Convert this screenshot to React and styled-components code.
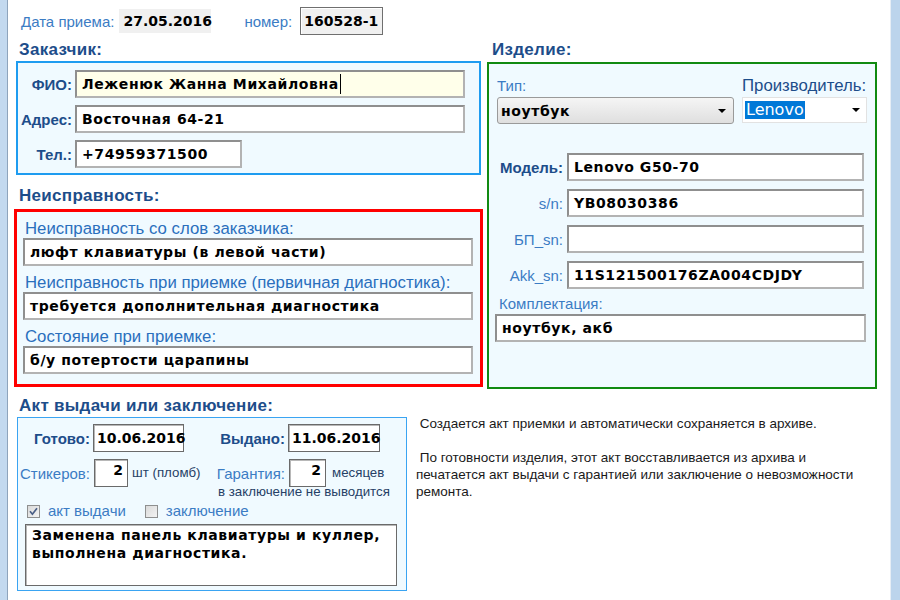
import React from 'react';
import styled, { createGlobalStyle } from 'styled-components';

const GlobalStyle = createGlobalStyle`
  html, body { margin: 0; padding: 0; background: #fff; overflow: hidden; }
  #root { width: 900px; height: 600px; }
`;

const DATA_FONT = `"DejaVu Sans", "Liberation Sans", sans-serif`;
const UI_FONT = `"Liberation Sans", Arial, sans-serif`;
const PANEL_BG = '#f0faff';
const DARK = '#1d4d8a';
const MID = '#2a6fbd';
const LIGHT = '#3b7cc4';

const Window = styled.div`
  display: flex;
  width: 900px;
  height: 600px;
  font-family: ${UI_FONT};
  background: #fff;
`;

const FrameLeft = styled.div`
  width: 7px;
  flex-shrink: 0;
  background: #c3d9ef;
  border-right: 1px solid #8ea4bc;
`;

const FrameRight = styled.div`
  width: 9px;
  flex-shrink: 0;
  background: #bcd4ec;
  border-left: 1px solid #e6edf5;
`;

const Main = styled.div`
  flex: 1;
  min-width: 0;
  display: flex;
  flex-direction: column;
`;

const TopRow = styled.div`
  display: flex;
  align-items: center;
  height: 28px;
  margin-top: 7px;
  padding-left: 13px;
`;

const Caption = styled.span`
  flex-shrink: 0;
  font-size: ${p => p.$size || 15}px;
  line-height: 17px;
  color: ${p => p.$color || LIGHT};
  margin-left: ${p => p.$ml || 0}px;
  width: ${p => (p.$w ? `${p.$w}px` : 'auto')};
  text-align: ${p => (p.$w ? 'right' : 'left')};
  white-space: nowrap;
`;

const StrongLabel = styled.span`
  flex-shrink: 0;
  font-size: 15px;
  font-weight: 700;
  line-height: 17px;
  color: ${DARK};
  width: ${p => (p.$w ? `${p.$w}px` : 'auto')};
  text-align: right;
`;

const DateValue = styled.div`
  box-sizing: border-box;
  width: 92px;
  height: 24px;
  margin-left: 5px;
  padding-left: 4px;
  display: flex;
  align-items: center;
  background: #f0f0f0;
  font: bold 14px ${DATA_FONT};
  color: #000;
`;

const NumberValue = styled.div`
  box-sizing: border-box;
  width: 83px;
  height: 28px;
  margin-left: 8px;
  padding-left: 3px;
  display: flex;
  align-items: center;
  background: #f0f0f0;
  border: 1px solid #6f6f6f;
  box-shadow: inset 1px 1px 0 #fff;
  font: bold 14px ${DATA_FONT};
  color: #000;
`;

const Columns = styled.div`
  display: flex;
  gap: 4px;
  margin-top: 6px;
  padding-left: 6px;
`;

const Column = styled.div`
  display: flex;
  flex-direction: column;
  width: ${p => p.$w}px;
`;

const Heading = styled.div`
  font: bold 17px/18px ${UI_FONT};
  letter-spacing: 0.3px;
  color: ${DARK};
  margin-left: ${p => p.$indent ?? 5}px;
  margin-top: ${p => p.$top || 0}px;
  margin-bottom: ${p => p.$bottom ?? 2}px;
  white-space: nowrap;
`;

const CustomerBox = styled.div`
  box-sizing: border-box;
  width: 465px;
  margin-left: 2px;
  border: 2px solid #1e9cf0;
  background: ${PANEL_BG};
  padding: 7px 0 5px;
  display: flex;
  flex-direction: column;
  gap: 7px;
`;

const FormRow = styled.div`
  display: flex;
  align-items: center;
  gap: ${p => p.$gap ?? 3}px;
`;

const Field = styled.div`
  box-sizing: border-box;
  flex-shrink: 0;
  width: ${p => p.$w}px;
  height: ${p => p.$h || 28}px;
  margin-left: ${p => p.$ml || 0}px;
  display: flex;
  align-items: center;
  padding: 0 5px;
  background: ${p => p.$bg || '#fff'};
  border: 2px solid;
  border-color: #8f8f8f #b3b3b3 #b3b3b3 #8f8f8f;
  font: bold 14px ${DATA_FONT};
  letter-spacing: 0.6px;
  color: #000;
  white-space: nowrap;
  overflow: hidden;
`;

const Caret = styled.span`
  display: inline-block;
  width: 1px;
  height: 20px;
  margin-left: 1px;
  background: #000;
`;

const FaultBox = styled.div`
  box-sizing: border-box;
  width: 469px;
  height: 178px;
  border: 3px solid #ff0000;
  background: ${PANEL_BG};
  padding: 0 7px 0 6px;
`;

const FaultLabel = styled.div`
  font-size: 16.8px;
  line-height: 17px;
  color: ${MID};
  margin: 8px 0 1px 2px;
  white-space: nowrap;
`;

const ProductBox = styled.div`
  box-sizing: border-box;
  height: 327px;
  border: 2px solid #118a11;
  background: ${PANEL_BG};
  padding-left: 8px;
`;

const Pickers = styled.div`
  display: flex;
  gap: 8px;
  margin-top: 13px;
`;

const PickerCol = styled.div`
  display: flex;
  flex-direction: column;
  gap: 3px;
  width: ${p => p.$w}px;
`;

const Select = styled.div`
  box-sizing: border-box;
  height: 27px;
  border: 1px solid #9a9a9a;
  border-radius: 3px;
  background: linear-gradient(#f5f5f5, #dfdfdf);
  display: flex;
  align-items: center;
  justify-content: space-between;
  padding: 0 7px 0 3px;
  font: bold 14px ${DATA_FONT};
  letter-spacing: 0.6px;
  color: #000;
`;

const Combo = styled.div`
  box-sizing: border-box;
  height: 26px;
  border: 1px solid #e2e2e2;
  background: #fff;
  display: flex;
  align-items: center;
  justify-content: space-between;
  padding: 0 6px 0 2px;
`;

const Highlight = styled.span`
  background: #0078d7;
  color: #fff;
  font: 16px/18px ${DATA_FONT};
  padding: 0 1px;
`;

const ProductRows = styled.div`
  display: flex;
  flex-direction: column;
  gap: 8px;
  margin-top: 29px;
`;

const KitLabel = styled(Caption)`
  display: block;
  margin: 6px 0 2px 2px;
`;

const BottomRow = styled.div`
  display: flex;
  margin-top: 8px;
  padding-left: 9px;
`;

const ActBox = styled.div`
  box-sizing: border-box;
  width: 390px;
  height: 174px;
  border: 1px solid #3aa4f2;
  background: ${PANEL_BG};
  padding-top: 6px;
`;

const ActRow = styled.div`
  display: flex;
  align-items: center;
  margin-top: ${p => p.$top || 0}px;
  padding-left: ${p => p.$pl || 0}px;
`;

const Part = styled.div`
  display: flex;
  align-items: center;
  gap: ${p => p.$gap ?? 3}px;
  width: ${p => (p.$w ? `${p.$w}px` : 'auto')};
`;

const DateBox = styled.div`
  box-sizing: border-box;
  width: ${p => p.$w}px;
  height: 28px;
  border: 1px solid #6a6a6a;
  box-shadow: inset 1px 1px 0 #b8b8b8;
  background: #fff;
  display: flex;
  align-items: center;
  justify-content: ${p => (p.$right ? 'flex-end' : 'flex-start')};
  padding: ${p => (p.$right ? '0 4px 6px 0' : '0 0 0 3px')};
  font: bold 14px ${DATA_FONT};
  color: #000;
`;

const Hint = styled.span`
  font-size: 13.3px;
  line-height: 14px;
  color: #263f66;
  margin-left: ${p => p.$ml || 0}px;
  margin-top: ${p => p.$mt || 0}px;
  white-space: nowrap;
`;

const CheckItem = styled.label`
  display: flex;
  align-items: center;
  gap: 8px;
  margin-left: ${p => p.$ml || 0}px;
  font-size: 15px;
  line-height: 16px;
  color: ${LIGHT};
`;

const Memo = styled.div`
  box-sizing: border-box;
  width: 372px;
  height: 62px;
  margin: 5px 0 0 7px;
  border: 1px solid #6a6a6a;
  box-shadow: inset 1px 1px 0 #b8b8b8;
  background: #fff;
  padding: 1px 6px;
  font: bold 14px/18px ${DATA_FONT};
  letter-spacing: 0.6px;
  color: #000;
`;

const Notes = styled.div`
  margin: 18px 0 0 9px;
  font-size: 13.5px;
  line-height: 17px;
  color: #1a1a1a;
  white-space: pre;
`;

const Arrow = () => (
  <svg width="8" height="4" viewBox="0 0 8 4">
    <path d="M0 0h8L4 4z" fill="#000" />
  </svg>
);

const CheckBox = ({ checked }) => (
  <svg width="13" height="13" viewBox="0 0 13 13">
    <defs>
      <linearGradient id="cbg" x1="0" y1="0" x2="1" y2="1">
        <stop offset="0" stopColor="#d9d9d9" />
        <stop offset="1" stopColor="#f4f4f4" />
      </linearGradient>
    </defs>
    <rect x="0.5" y="0.5" width="12" height="12" fill="url(#cbg)" stroke="#8e8f8f" />
    {checked && (
      <path d="M3 6.3 L5.4 9.2 L10 3.2" stroke="#4a5f86" strokeWidth="1.7" fill="none" />
    )}
  </svg>
);

const NOTES =
  ' Создается акт приемки и автоматически сохраняется в архиве.\n\n' +
  ' По готовности изделия, этот акт восставливается из архива и\n' +
  'печатается акт выдачи с гарантией или заключение о невозможности\n' +
  'ремонта.';

export default function App() {
  return (
    <>
      <GlobalStyle />
      <Window>
        <FrameLeft />
        <Main>
          <TopRow>
            <Caption>Дата приема:</Caption>
            <DateValue>27.05.2016</DateValue>
            <Caption $ml={33}>номер:</Caption>
            <NumberValue>160528-1</NumberValue>
          </TopRow>

          <Columns>
            <Column $w={469}>
              <Heading>Заказчик:</Heading>
              <CustomerBox>
                <FormRow>
                  <StrongLabel $w={54}>ФИО:</StrongLabel>
                  <Field $w={390} $bg="#ffffea">
                    Леженюк Жанна Михайловна<Caret />
                  </Field>
                </FormRow>
                <FormRow>
                  <StrongLabel $w={54}>Адрес:</StrongLabel>
                  <Field $w={390}>Восточная 64-21</Field>
                </FormRow>
                <FormRow>
                  <StrongLabel $w={54}>Тел.:</StrongLabel>
                  <Field $w={167}>+74959371500</Field>
                </FormRow>
              </CustomerBox>

              <Heading $top={12} $bottom={4}>Неисправность:</Heading>
              <FaultBox>
                <FaultLabel>Неисправность со слов заказчика:</FaultLabel>
                <Field $w={450}>люфт клавиатуры (в левой части)</Field>
                <FaultLabel>Неисправность при приемке (первичная диагностика):</FaultLabel>
                <Field $w={450}>требуется дополнительная диагностика</Field>
                <FaultLabel>Состояние при приемке:</FaultLabel>
                <Field $w={450}>б/у потертости царапины</Field>
              </FaultBox>
            </Column>

            <Column $w={390}>
              <Heading $bottom={3}>Изделие:</Heading>
              <ProductBox>
                <Pickers>
                  <PickerCol $w={237}>
                    <Caption $size={15}>Тип:</Caption>
                    <Select>
                      ноутбук
                      <Arrow />
                    </Select>
                  </PickerCol>
                  <PickerCol $w={125}>
                    <Caption $size={16.8} $color={DARK}>Производитель:</Caption>
                    <Combo>
                      <Highlight>Lenovo</Highlight>
                      <Arrow />
                    </Combo>
                  </PickerCol>
                </Pickers>

                <ProductRows>
                  <FormRow $gap={4}>
                    <StrongLabel $w={66}>Модель:</StrongLabel>
                    <Field $w={297}>Lenovo G50-70</Field>
                  </FormRow>
                  <FormRow $gap={4}>
                    <Caption $w={66}>s/n:</Caption>
                    <Field $w={297}>YB08030386</Field>
                  </FormRow>
                  <FormRow $gap={4}>
                    <Caption $w={66}>БП_sn:</Caption>
                    <Field $w={297} />
                  </FormRow>
                  <FormRow $gap={4}>
                    <Caption $w={66}>Akk_sn:</Caption>
                    <Field $w={297}>11S121500176ZA004CDJDY</Field>
                  </FormRow>
                </ProductRows>

                <KitLabel>Комплектация:</KitLabel>
                <Field $w={371} $ml={-2}>ноутбук, акб</Field>
              </ProductBox>
            </Column>
          </Columns>

          <BottomRow>
            <Column $w={390}>
              <Heading $indent={2}>Акт выдачи или заключение:</Heading>
              <ActBox>
                <ActRow>
                  <Part $w={187}>
                    <StrongLabel $w={72}>Готово:</StrongLabel>
                    <DateBox $w={91}>10.06.2016</DateBox>
                  </Part>
                  <Part>
                    <StrongLabel $w={80}>Выдано:</StrongLabel>
                    <DateBox $w={92}>11.06.2016</DateBox>
                  </Part>
                </ActRow>
                <ActRow $top={7}>
                  <Part $w={187} $gap={4}>
                    <Caption $w={72}>Стикеров:</Caption>
                    <DateBox $w={34} $right>2</DateBox>
                    <Hint>шт (пломб)</Hint>
                  </Part>
                  <Part $gap={4}>
                    <Caption $w={80}>Гарантия:</Caption>
                    <DateBox $w={37} $right>2</DateBox>
                    <Hint $ml={2}>месяцев</Hint>
                  </Part>
                </ActRow>
                <ActRow>
                  <Hint $ml={200} $mt={-2}>в заключение не выводится</Hint>
                </ActRow>
                <ActRow $top={4} $pl={9}>
                  <CheckItem>
                    <CheckBox checked />
                    акт выдачи
                  </CheckItem>
                  <CheckItem $ml={19}>
                    <CheckBox />
                    заключение
                  </CheckItem>
                </ActRow>
                <Memo>
                  Заменена панель клавиатуры и куллер,
                  <br />
                  выполнена диагностика.
                </Memo>
              </ActBox>
            </Column>
            <Notes>{NOTES}</Notes>
          </BottomRow>
        </Main>
        <FrameRight />
      </Window>
    </>
  );
}
